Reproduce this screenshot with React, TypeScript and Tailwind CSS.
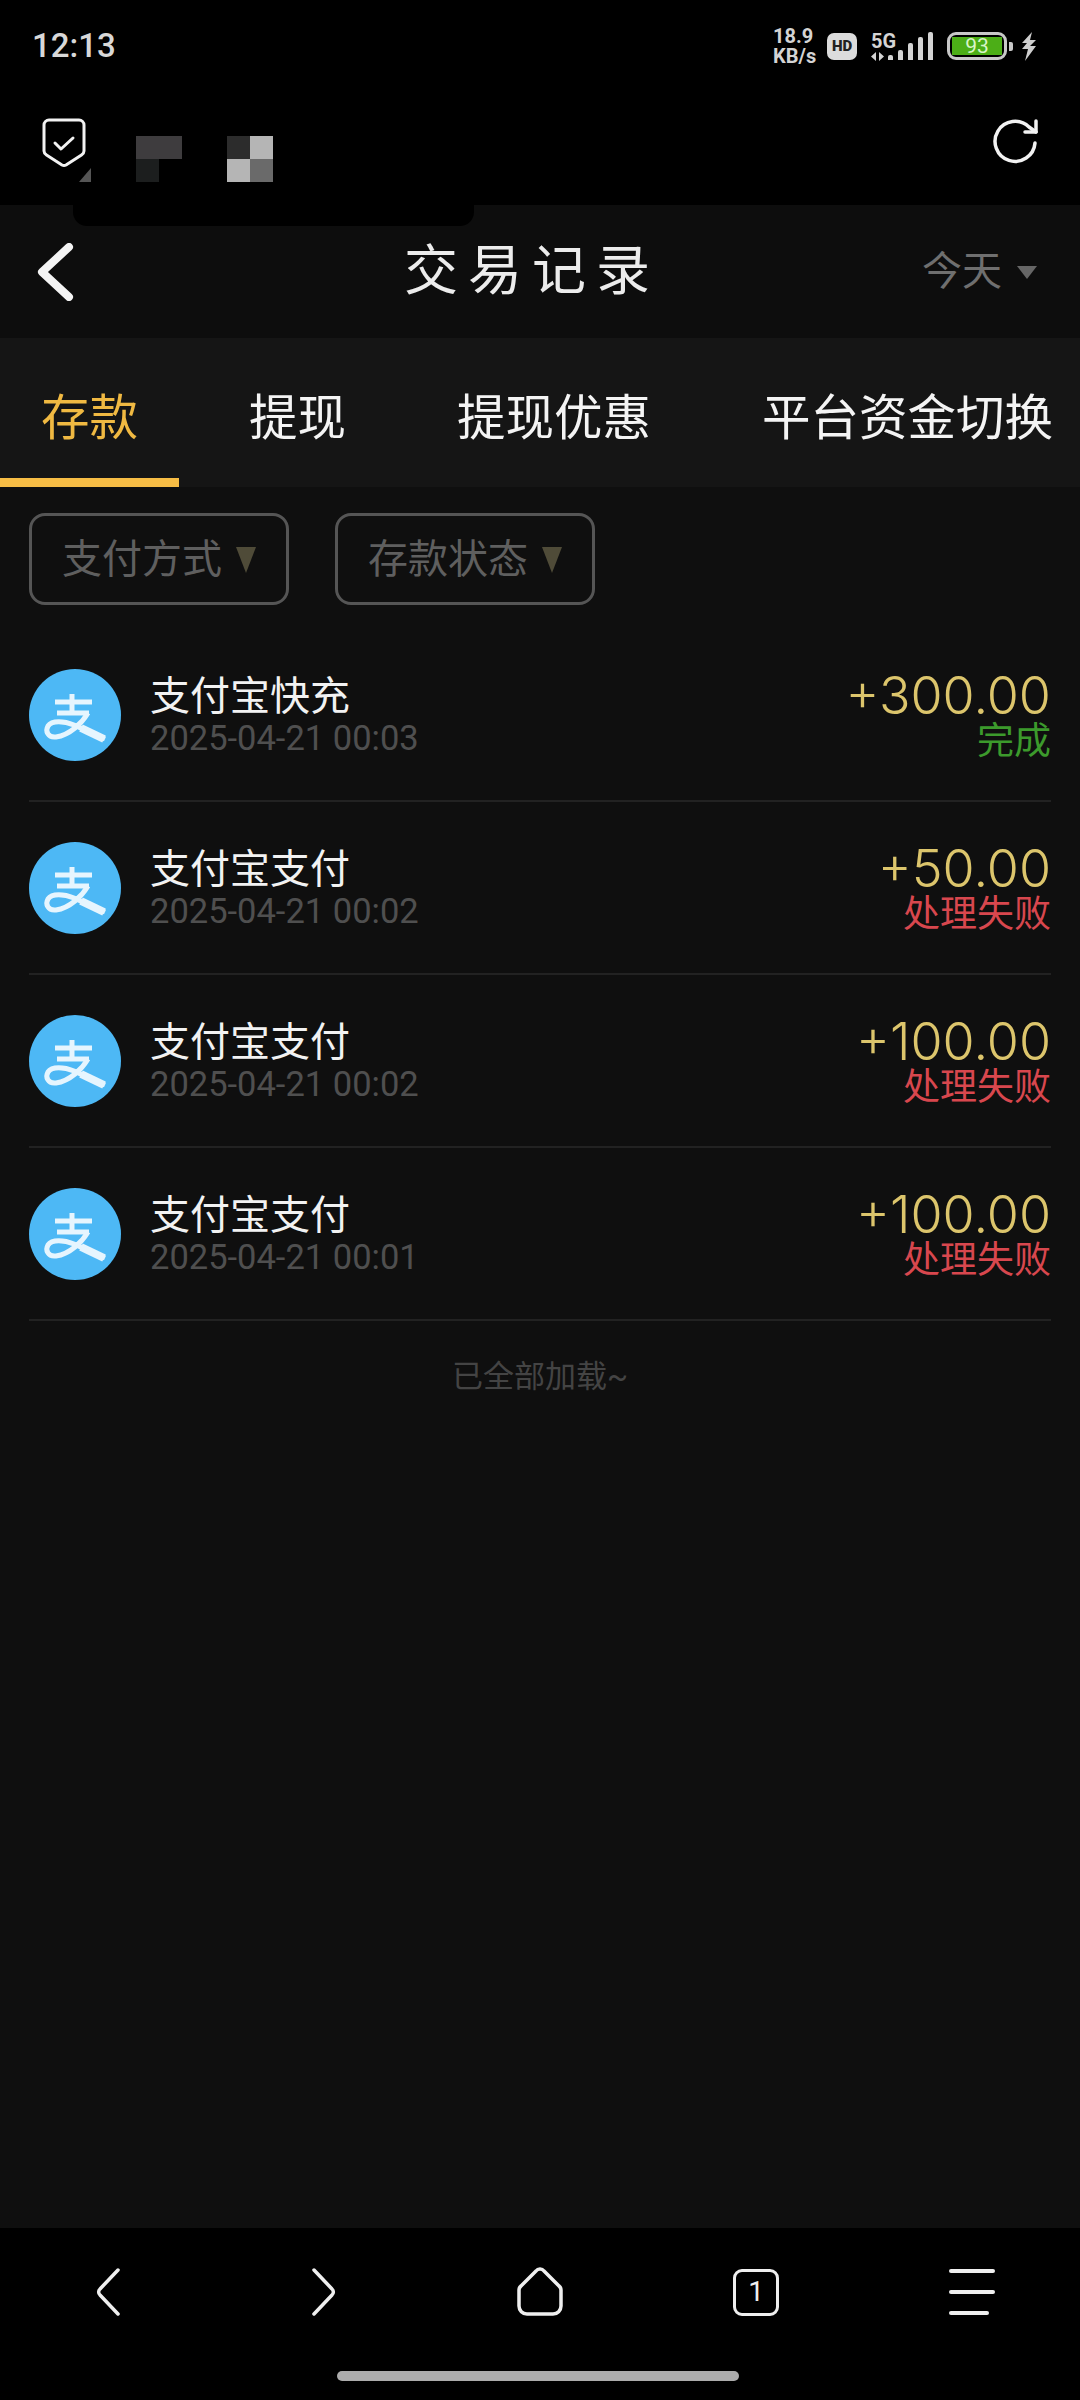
const FONT = { fontFamily: 'Roboto, "Noto Sans CJK SC", sans-serif' };

function StatusIcons() {
  const bars = [5, 10, 17, 23, 28];
  return (
    <div className="flex items-center">
      <div className="flex w-[54px] flex-col text-[20px] leading-[20px] font-bold text-[#d4d4d4]">
        <span>18.9</span>
        <span>KB/s</span>
      </div>
      <div className="flex h-[27px] w-[30px] items-center justify-center rounded-[7px] bg-[#dcdcdc] text-[15px] font-black text-[#222]">
        HD
      </div>
      <div className="ml-[14px] flex w-[16px] flex-col text-[20px] leading-[20px] font-bold text-[#d4d4d4]">
        <span>5G</span>
        <svg width="14" height="9" viewBox="0 0 14 9" fill="#d4d4d4" className="mt-[1px]">
          <path d="M0 4.500 5 0v9zM8 0l5 4.500L8 9z" />
        </svg>
      </div>
      <div className="ml-[1px] flex h-[28px] items-end gap-[5px]">
        {bars.map((h) => (
          <div key={h} className="w-[5px] rounded-t-[2px] bg-[#d4d4d4]" style={{ height: h }} />
        ))}
      </div>
      <div className="ml-[14px] flex h-[28px] w-[60px] items-center justify-center rounded-[9px] border-[3px] border-[#c8c8c8] p-[2px]">
        <div className="flex h-full w-full items-center justify-center bg-[#4cae17] text-[21px] leading-none text-[#d8f5c8]">
          93
        </div>
      </div>
      <div className="ml-[2px] h-[9px] w-[4px] rounded-r-[2px] bg-[#c8c8c8]" />
      <svg width="16" height="29" viewBox="0 0 16 29" fill="#cfcfcf" className="ml-[8px]">
        <path d="M11 0 1 11h5L1 17h6L4 29l11-15H9l6-6H9z" />
      </svg>
    </div>
  );
}

function AlipayLogo() {
  return (
    <svg width="92" height="92" viewBox="0 0 92 92" className="shrink-0">
      <circle cx="46" cy="46" r="46" fill="#4db8f5" />
      <g fill="none" stroke="#e6f5fe" strokeLinejoin="round">
        <path d="M26 33h37M43 25v20M28 44h32" strokeWidth="5" />
        <path d="M59 44C53 54 41 66 27 68 19 69 16 62 19 57 23 51 35 52 45 56L76 70" strokeWidth="5" />
        <path d="M52 59 75 70" strokeWidth="8" />
      </g>
    </svg>
  );
}

type Tx = { name: string; time: string; amount: string; status: string; ok: boolean };

const RECORDS: Tx[] = [
  { name: '支付宝快充', time: '2025-04-21 00:03', amount: '+300.00', status: '完成', ok: true },
  { name: '支付宝支付', time: '2025-04-21 00:02', amount: '+50.00', status: '处理失败', ok: false },
  { name: '支付宝支付', time: '2025-04-21 00:02', amount: '+100.00', status: '处理失败', ok: false },
  { name: '支付宝支付', time: '2025-04-21 00:01', amount: '+100.00', status: '处理失败', ok: false },
];

function Row({ tx }: { tx: Tx }) {
  return (
    <div className="flex h-[173px] items-center border-b-2 border-[#222222]">
      <AlipayLogo />
      <div className="ml-[29px] flex flex-1 flex-col pt-[5px]">
        <span className="text-[40px] leading-[42px] text-[#f2f2f2]">{tx.name}</span>
        <span className="text-[34.500px] leading-[40px] text-[#4f4f4f]">{tx.time}</span>
      </div>
      <div className="flex flex-col items-end pt-[7px]">
        <span className="font-['Inter'] text-[52px] font-light leading-[46px] text-[#dcc56c]">{tx.amount}</span>
        <span className={`text-[37px] leading-[45px] ${tx.ok ? 'text-[#3c9a2c]' : 'text-[#d8474e]'}`}>
          {tx.status}
        </span>
      </div>
    </div>
  );
}

function Filter({ label }: { label: string }) {
  return (
    <div className="flex h-[92px] w-[260px] items-center justify-center gap-[14px] rounded-[16px] border-[3px] border-[#555555] pt-[2px]">
      <span className="text-[40px] text-[#5f5f5f]">{label}</span>
      <svg width="20" height="26" viewBox="0 0 20 26" fill="#4f4b38">
        <path d="M0 0h20L10 26z" />
      </svg>
    </div>
  );
}

export default function App() {
  return (
    <div style={FONT} className="relative flex h-[2400px] w-[1080px] flex-col overflow-hidden bg-[#0f0f0f] text-white">
      {/* status bar */}
      <div className="flex h-[92px] items-center justify-between bg-black pl-[32px] pr-[43px]">
        <span className="text-[33px] font-medium text-[#d8d8d8]">12:13</span>
        <StatusIcons />
      </div>

      {/* browser address bar */}
      <div className="flex h-[113px] items-start bg-black px-[42px] pt-[26px]">
        <svg width="44" height="50" viewBox="0 0 44 50" fill="none" stroke="#f2f2f2" strokeWidth="3" strokeLinejoin="round" strokeLinecap="round">
          <path d="M7 2h30a5 5 0 0 1 5 5v26c0 2-1 3-2.500 4L24 47a4 4 0 0 1-4 0L4.500 37C3 36 2 35 2 33V7a5 5 0 0 1 5-5z" />
          <path d="M13 25l6 6 12-11" />
        </svg>
        <div className="ml-[50px] mt-[18px] grid h-[46px] w-[46px] grid-cols-2">
          <div className="bg-[#3e3c3e]" />
          <div className="bg-[#3e3c3e]" />
          <div className="bg-[#1c1e1e]" />
          <div />
        </div>
        <div className="ml-[45px] mt-[18px] grid h-[46px] w-[46px] grid-cols-2">
          <div className="bg-[#2c2c2c]" />
          <div className="bg-[#b5b5b5]" />
          <div className="bg-[#b5b5b5]" />
          <div className="bg-[#6a6a6a]" />
        </div>
        <svg width="46" height="46" viewBox="0 0 46 46" fill="none" stroke="#f2f2f2" strokeWidth="3.500" strokeLinecap="round" strokeLinejoin="round" className="ml-auto">
          <path d="M43 25a20 20 0 1 1-6-16l7 5" />
          <path d="M44 3v11H33" />
        </svg>
      </div>

      {/* page title */}
      <div className="relative flex h-[133px] items-center justify-center bg-[#0d0d0d]">
        <svg width="38" height="58" viewBox="0 0 38 58" fill="none" stroke="#f4f4f4" strokeWidth="8" strokeLinecap="round" strokeLinejoin="round" className="absolute left-[36px] top-[38px]">
          <path d="M33 4 6 29l27 25" />
        </svg>
        <span className="pr-[16px] text-[54px] tracking-[10px] text-[#ececec]">交易记录</span>
        <div className="absolute right-[43px] top-[43px] flex items-center gap-[15px]">
          <span className="text-[40px] leading-[48px] text-[#6f6f6f]">今天</span>
          <svg width="20" height="13" viewBox="0 0 20 13" fill="#666666">
            <path d="M0 0h20L10 13z" />
          </svg>
        </div>
      </div>

      {/* tabs */}
      <div className="relative flex h-[149px] gap-[111px] overflow-hidden whitespace-nowrap bg-[#151515] pl-[41px] pt-[45px] text-[48.500px] leading-[72px]">
        <span className="text-[#f0b942]">存款</span>
        <span className="text-[#f4f4f4]">提现</span>
        <span className="text-[#f4f4f4]">提现优惠</span>
        <span className="text-[#f4f4f4]">平台资金切换</span>
        <div className="absolute bottom-0 left-0 h-[9px] w-[179px] bg-[#f7bd45]" />
      </div>

      {/* filters and list */}
      <div className="flex flex-1 flex-col px-[29px] pt-[26px]">
        <div className="flex gap-[46px]">
          <Filter label="支付方式" />
          <Filter label="存款状态" />
        </div>
        <div className="mt-[24px]">
          {RECORDS.map((tx, i) => (
            <Row key={i} tx={tx} />
          ))}
        </div>
        <p className="mt-[33px] text-center text-[31px] text-[#444444]">已全部加载~</p>
      </div>

      {/* browser toolbar */}
      <div className="flex h-[172px] flex-col bg-black">
        <div className="grid h-[128px] grid-cols-5 items-center justify-items-center">
          <svg width="26" height="50" viewBox="0 0 26 50" fill="none" stroke="#efefef" strokeWidth="3.500" strokeLinecap="round" strokeLinejoin="round">
            <path d="M23 3 5 22a4 4 0 0 0 0 6l18 19" />
          </svg>
          <svg width="26" height="50" viewBox="0 0 26 50" fill="none" stroke="#efefef" strokeWidth="3.500" strokeLinecap="round" strokeLinejoin="round">
            <path d="M3 3l18 19a4 4 0 0 1 0 6L3 47" />
          </svg>
          <svg width="48" height="50" viewBox="0 0 48 50" fill="none" stroke="#efefef" strokeWidth="3.500" strokeLinecap="round" strokeLinejoin="round">
            <path d="M20 4a5 5 0 0 1 8 0l15 15a5 5 0 0 1 2 4v16a8 8 0 0 1-8 8H11a8 8 0 0 1-8-8V23a5 5 0 0 1 2-4z" />
          </svg>
          <div className="flex h-[47px] w-[46px] items-center justify-center rounded-[9px] border-[3px] border-[#efefef] text-[28px] leading-none text-[#efefef]">
            1
          </div>
          <div className="flex w-[46px] flex-col gap-[17px]">
            <div className="h-[4px] w-[46px] rounded-full bg-[#efefef]" />
            <div className="h-[4px] w-[46px] rounded-full bg-[#efefef]" />
            <div className="h-[4px] w-[40px] rounded-full bg-[#efefef]" />
          </div>
        </div>
        <div className="ml-[337px] mt-[15px] h-[10px] w-[402px] rounded-full bg-[#acacac]" />
      </div>

      {/* masking patch that spills over the title bar */}
      <div className="absolute left-[73px] top-[205px] h-[21px] w-[401px] rounded-b-[14px] bg-black" />
      <div className="absolute left-[79px] top-[168px] h-[14px] w-[12px] bg-[#555555] [clip-path:polygon(100%_0,100%_100%,0_100%)]" />
    </div>
  );
}
